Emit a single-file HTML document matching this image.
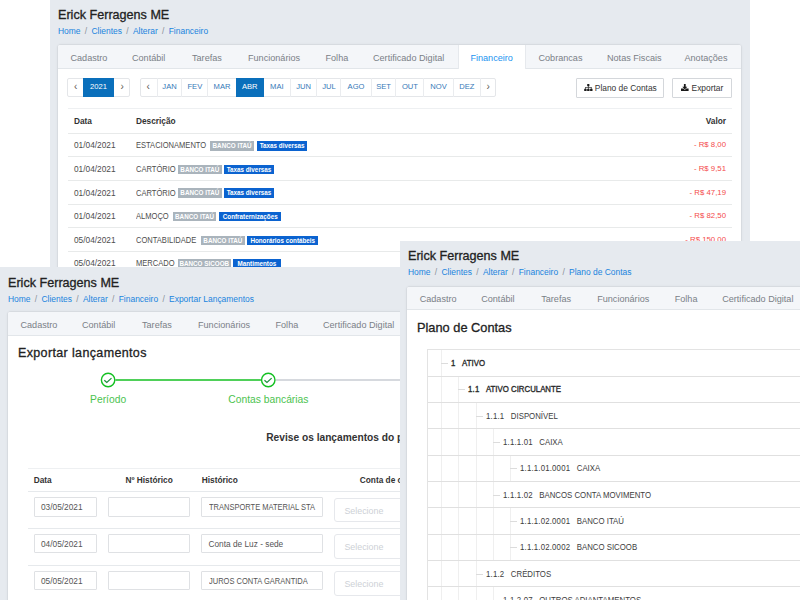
<!DOCTYPE html>
<html><head><meta charset="utf-8">
<style>
*{box-sizing:border-box;margin:0;padding:0}
html,body{width:800px;height:600px;overflow:hidden;background:#fff;font-family:"Liberation Sans",sans-serif;color:#444}
.scr{position:absolute;background:#e6eaef;overflow:hidden}
.ttl{position:absolute;left:8px;top:7px;font-size:12.6px;color:#222;white-space:nowrap;-webkit-text-stroke:0.3px #222}
.bc{position:absolute;left:8px;top:26px;font-size:8.45px;color:#1a84de;white-space:nowrap}
.bc i{font-style:normal;color:#8a9097;padding:0 4.3px}
.card{position:absolute;left:8px;top:45px;background:#fff;border-radius:2px;box-shadow:0 0 0 0.5px rgba(0,0,0,.05),0 0 3px rgba(0,0,0,.11)}
.tabs{position:absolute;left:0;top:0;right:0;height:23.5px;border-radius:2px 2px 0 0;background:#f4f6f9;border-bottom:1px solid #e2e6ea}
.tabs span{position:absolute;top:7.7px;font-size:9.1px;color:#7a8087;white-space:nowrap}
.tabs .act{background:#fff;color:#2193f0;top:0;height:23.5px;padding-top:7.7px;border-left:1px solid #e6e9ed;border-right:1px solid #e6e9ed}
.a{position:absolute;white-space:nowrap}
.grp{position:absolute;height:18.8px;border:1px solid #e4e6e9;border-radius:2px;background:#fff}
.grp b{position:absolute;top:-1px;height:18.8px;font-weight:normal;text-align:center;line-height:18.8px;font-size:7.6px;color:#3579b8}
.grp b.on{background:#0a6fbb;color:#fff}
.grp b.ch{color:#5f5955;font-size:10px;font-weight:normal}
.btn{position:absolute;height:19.5px;border:1px solid #d4d7db;border-radius:1px;background:#fff;font-size:8.4px;color:#333;line-height:17.5px;white-space:nowrap}
.tb{position:absolute;left:9.5px;width:664.5px;border-top:1px solid #eef0f2}
.tr{position:absolute;left:0;right:0;border-bottom:1px solid #e8eaea}
.tr span{position:absolute;white-space:nowrap;font-size:8.3px;color:#4d4d4d}
.th span{font-weight:bold;color:#333;font-size:8.3px}
.bd{position:absolute;font-style:normal;height:9.5px;line-height:9.7px;font-size:6.3px;font-weight:bold;color:#fff;text-align:center;white-space:nowrap;overflow:hidden}
.tr span.desc{font-size:8.3px;transform:scaleX(0.91);transform-origin:0 0}
.bg{background:#aab4bc}
.bb{background:#0b63d0}
.tr span.val{color:#f44b4b;right:6px;font-size:7.8px}
.h2{font-size:12.5px;letter-spacing:0.36px;color:#222;-webkit-text-stroke:0.3px #222}
.h3{font-size:12.8px;color:#222;-webkit-text-stroke:0.3px #222}
.stl{text-align:center;font-size:10.3px;color:#4cc34f}
.rev{font-size:10.2px;font-weight:bold;color:#333}
.th2 span{font-size:8.3px;font-weight:bold;color:#333}
.inp.u span{display:inline-block;font-size:8.3px;transform:scaleX(0.905);transform-origin:0 0}
.inp{position:absolute;top:4.8px;height:19.5px;border:1px solid #dfe1e4;border-radius:1px;font-size:8.3px;color:#555;padding-left:6.5px;line-height:19px;white-space:nowrap;overflow:hidden}
.sel{position:absolute;top:5.3px;height:24.5px;border:1px solid #e6e8ec;border-radius:3px;font-size:8.9px;color:#cdd1d6;padding-left:9px;line-height:24px;white-space:nowrap}
.trow{border-bottom:1.6px solid #e0e0e0}
.vl{position:absolute;top:0;bottom:0;width:1px;background:#efefef}
.hl{position:absolute;top:12.5px;width:7px;height:1px;background:#dcdcdc}
.tn{position:absolute;top:7.6px;font-size:8.6px;color:#3d3d3d;white-space:nowrap;transform:scaleX(0.91);transform-origin:0 0}
.tn em{font-style:normal;padding-left:7.2px}
.tn u{text-decoration:none;letter-spacing:0.2px}
.tn.b{color:#2a2a2a;-webkit-text-stroke:0.35px #2a2a2a}

</style></head><body>
<div class="scr" style="left:50px;top:0px;width:700px;height:600px">
  <div class="ttl" style="top:7.5px">Erick Ferragens ME</div>
  <div class="bc" style="top:26.0px">Home<i>/</i>Clientes<i>/</i>Alterar<i>/</i>Financeiro</div>
  <div class="card" style="left:8px;top:45px;width:683px;height:600px">
<div class="tabs"><span style="left:12.5px">Cadastro</span><span style="left:74px">Contábil</span><span style="left:134px">Tarefas</span><span style="left:190px">Funcionários</span><span style="left:267.5px">Folha</span><span style="left:315px">Certificado Digital</span><span class="act" style="left:399.7px;width:67.9px;text-align:center">Financeiro</span><span style="left:480.5px">Cobrancas</span><span style="left:549px">Notas Fiscais</span><span style="left:626.5px">Anotações</span></div>
<div class="grp" style="left:9.20px;top:33.2px;width:63.00px"><b class="ch" style="left:-1px;width:16.8px">‹</b><b class="on" style="left:14.8px;width:31px">2021</b><b class="ch" style="left:45.8px;width:16.2px">›</b></div>
<div class="grp" style="left:81.75px;top:33.2px;width:355.85px"><b class="ch" style="left:-1.00px;width:16.95px;">‹</b><b class="" style="left:15.95px;width:24.70px;border-left:1px solid #eaecef;">JAN</b><b class="" style="left:40.65px;width:25.85px;border-left:1px solid #eaecef;">FEV</b><b class="" style="left:66.50px;width:28.50px;border-left:1px solid #eaecef;">MAR</b><b class="on" style="left:95.00px;width:28.00px;">ABR</b><b class="" style="left:123.00px;width:26.25px;">MAI</b><b class="" style="left:149.25px;width:26.40px;border-left:1px solid #eaecef;">JUN</b><b class="" style="left:175.65px;width:24.00px;border-left:1px solid #eaecef;">JUL</b><b class="" style="left:199.65px;width:30.30px;border-left:1px solid #eaecef;">AGO</b><b class="" style="left:229.95px;width:24.70px;border-left:1px solid #eaecef;">SET</b><b class="" style="left:254.65px;width:28.00px;border-left:1px solid #eaecef;">OUT</b><b class="" style="left:282.65px;width:29.35px;border-left:1px solid #eaecef;">NOV</b><b class="" style="left:312.00px;width:27.00px;border-left:1px solid #eaecef;">DEZ</b><b class="ch" style="left:339.00px;width:15.85px;border-left:1px solid #eaecef;">›</b></div>
<div class="btn" style="left:517.50px;top:33px;width:88.50px"><svg width="9" height="8" viewBox="0 0 9 8" style="position:absolute;left:7.5px;top:5.2px"><rect x="3.2" y="0" width="2.2" height="2.2" rx="0.3" fill="#1a1a1a"/><rect x="4" y="2" width="0.7" height="1.4" fill="#333"/><rect x="1.1" y="3.3" width="6.6" height="0.7" fill="#333"/><rect x="1.1" y="3.3" width="0.7" height="1.6" fill="#333"/><rect x="6.9" y="3.3" width="0.7" height="1.6" fill="#333"/><rect x="4" y="3.3" width="0.7" height="1.6" fill="#333"/><rect x="0.2" y="4.7" width="2.4" height="2.4" rx="0.3" fill="#1a1a1a"/><rect x="3.15" y="4.7" width="2.4" height="2.4" rx="0.3" fill="#1a1a1a"/><rect x="6.1" y="4.7" width="2.4" height="2.4" rx="0.3" fill="#1a1a1a"/></svg><span class="a" style="left:18.3px;top:0.8px">Plano de Contas</span></div>
<div class="btn" style="left:614.00px;top:33px;width:60.00px"><svg width="8" height="8" viewBox="0 0 8 8" style="position:absolute;left:7.6px;top:4.6px"><rect x="2.9" y="0" width="1.8" height="3" fill="#1a1a1a"/><path d="M1.3 2.8h5L3.8 5.4z" fill="#1a1a1a"/><path d="M0 4.6h2.4L3.8 6 5.2 4.6H7.6V6.9H0z" fill="#1a1a1a"/></svg><span class="a" style="left:18.6px;top:0.8px">Exportar</span></div>
<div class="tb" style="top:63.00px;height:400px"><div class="tr th" style="top:0.00px;height:24.70px"><span style="left:6.5px;top:7.35px">Data</span><span style="left:68.5px;top:7.35px">Descrição</span><span style="right:6px;top:7.35px">Valor</span></div><div class="tr" style="top:24.70px;height:23.65px"><span style="left:6.5px;top:6.53px">01/04/2021</span><span class="desc" style="left:68.5px;top:6.53px">ESTACIONAMENTO</span><i class="bd bg" style="left:142.70px;width:43.80px;top:7.33px">BANCO ITAÚ</i><i class="bd bb" style="left:189.50px;width:50.20px;top:7.33px">Taxas diversas</i><span class="val" style="top:6.73px">- R$ 8,00</span></div><div class="tr" style="top:48.35px;height:23.65px"><span style="left:6.5px;top:6.53px">01/04/2021</span><span class="desc" style="left:68.5px;top:6.53px">CARTÓRIO</span><i class="bd bg" style="left:110.50px;width:43.80px;top:7.33px">BANCO ITAÚ</i><i class="bd bb" style="left:156.30px;width:50.40px;top:7.33px">Taxas diversas</i><span class="val" style="top:6.73px">- R$ 9,51</span></div><div class="tr" style="top:72.00px;height:23.65px"><span style="left:6.5px;top:6.53px">01/04/2021</span><span class="desc" style="left:68.5px;top:6.53px">CARTÓRIO</span><i class="bd bg" style="left:110.50px;width:43.80px;top:7.33px">BANCO ITAÚ</i><i class="bd bb" style="left:156.30px;width:50.40px;top:7.33px">Taxas diversas</i><span class="val" style="top:6.73px">- R$ 47,19</span></div><div class="tr" style="top:95.65px;height:23.65px"><span style="left:6.5px;top:6.53px">01/04/2021</span><span class="desc" style="left:68.5px;top:6.53px">ALMOÇO</span><i class="bd bg" style="left:105.20px;width:43.80px;top:7.33px">BANCO ITAÚ</i><i class="bd bb" style="left:151.75px;width:62.00px;top:7.33px">Confraternizações</i><span class="val" style="top:6.73px">- R$ 82,50</span></div><div class="tr" style="top:119.30px;height:23.65px"><span style="left:6.5px;top:6.52px">05/04/2021</span><span class="desc" style="left:68.5px;top:6.52px">CONTABILIDADE</span><i class="bd bg" style="left:133.50px;width:43.80px;top:7.32px">BANCO ITAÚ</i><i class="bd bb" style="left:179.75px;width:71.00px;top:7.32px">Honorários contábeis</i><span class="val" style="top:6.72px">- R$ 150,00</span></div><div class="tr" style="top:142.95px;height:23.65px"><span style="left:6.5px;top:6.53px">05/04/2021</span><span class="desc" style="left:68.5px;top:6.53px">MERCADO</span><i class="bd bg" style="left:110.50px;width:52.50px;top:7.33px">BANCO SICOOB</i><i class="bd bb" style="left:165.75px;width:47.25px;top:7.33px">Mantimentos</i><span class="val" style="top:6.73px">- R$ 32,00</span></div></div>
  </div>
</div>
<div class="scr" style="left:0px;top:267px;width:400px;height:333px">
  <div class="ttl" style="top:8.5px">Erick Ferragens ME</div>
  <div class="bc" style="top:26.5px">Home<i>/</i>Clientes<i>/</i>Alterar<i>/</i>Financeiro<i>/</i>Exportar Lançamentos</div>
  <div class="card" style="left:8px;top:45px;width:460px;height:400px">
<div class="tabs"><span style="left:12.5px">Cadastro</span><span style="left:74px">Contábil</span><span style="left:134px">Tarefas</span><span style="left:190px">Funcionários</span><span style="left:267.5px">Folha</span><span style="left:315px">Certificado Digital</span></div>
<div class="a h2" style="left:10px;top:34px">Exportar lançamentos</div>
<svg class="a" style="left:0;top:58.40px" width="420" height="20" viewBox="8 370.40 420 20"><line x1="115.40" y1="380.40" x2="260.95" y2="380.40" stroke="#14c022" stroke-width="1.4"/><line x1="275.55" y1="380.40" x2="430" y2="380.40" stroke="#c9ccd3" stroke-width="1.4"/><circle cx="108.10" cy="380.40" r="6.7" fill="#fff" stroke="#14c022" stroke-width="1.4"/><path d="M104.30 380.60 L106.80 382.80 L111.50 378.50" fill="none" stroke="#1d8f3c" stroke-width="1.25"/><circle cx="268.25" cy="380.40" r="6.7" fill="#fff" stroke="#14c022" stroke-width="1.4"/><path d="M264.45 380.60 L266.95 382.80 L271.65 378.50" fill="none" stroke="#1d8f3c" stroke-width="1.25"/></svg>
<div class="a stl" style="left:60.10px;width:80px;top:81.5px">Período</div>
<div class="a stl" style="left:210.40px;width:100px;top:81.5px">Contas bancárias</div>
<div class="a rev" style="left:258.25px;top:120px">Revise os lançamentos do período</div>
<div class="a" style="left:19.5px;top:155.5px;width:500px;height:200px;border-top:1px solid #eef0f2"><div class="a th2" style="left:0;top:0;width:500px;height:23.75px;border-bottom:1px solid #e6e9ec"><span class="a" style="left:6.25px;top:6px">Data</span><span class="a" style="left:98.00px;top:6px">Nº Histórico</span><span class="a" style="left:174.30px;top:6px">Histórico</span><span class="a" style="left:332.30px;top:6px">Conta de crédito</span></div><div class="a" style="left:0;top:23.75px;width:500px;height:37px;border-bottom:1px solid #e6e9ec"><div class="inp" style="left:6.00px;width:63px">03/05/2021</div><div class="inp" style="left:80.50px;width:81.5px"></div><div class="inp u" style="left:173.50px;width:121.5px"><span>TRANSPORTE MATERIAL STA</span></div><div class="sel" style="left:306.90px;width:150px">Selecione</div></div><div class="a" style="left:0;top:60.65px;width:500px;height:37px;border-bottom:1px solid #e6e9ec"><div class="inp" style="left:6.00px;width:63px">04/05/2021</div><div class="inp" style="left:80.50px;width:81.5px"></div><div class="inp" style="left:173.50px;width:121.5px"><span>Conta de Luz - sede</span></div><div class="sel" style="left:306.90px;width:150px">Selecione</div></div><div class="a" style="left:0;top:97.55px;width:500px;height:37px;border-bottom:1px solid #e6e9ec"><div class="inp" style="left:6.00px;width:63px">05/05/2021</div><div class="inp" style="left:80.50px;width:81.5px"></div><div class="inp u" style="left:173.50px;width:121.5px"><span>JUROS CONTA GARANTIDA</span></div><div class="sel" style="left:306.90px;width:150px">Selecione</div></div></div>
  </div>
</div>
<div class="scr" style="left:400px;top:241px;width:400px;height:359px">
  <div class="ttl" style="top:7.5px">Erick Ferragens ME</div>
  <div class="bc" style="top:25.7px">Home<i>/</i>Clientes<i>/</i>Alterar<i>/</i>Financeiro<i>/</i>Plano de Contas</div>
  <div class="card" style="left:7.2px;top:45.8px;width:460px;height:400px">
<div class="tabs"><span style="left:12.5px">Cadastro</span><span style="left:74px">Contábil</span><span style="left:134px">Tarefas</span><span style="left:190px">Funcionários</span><span style="left:267.5px">Folha</span><span style="left:315px">Certificado Digital</span></div>
<div class="a h3" style="left:9.80px;top:33.20px">Plano de Contas</div>
<div class="a" style="left:19.40px;top:62.60px;width:500px;height:300px;border-left:1px solid #e3e3e3;border-top:1px solid #e3e3e3"><div class="a trow" style="left:0;top:0.00px;width:500px;height:26.33px"><i class="vl" style="left:13.30px"></i><i class="hl" style="left:13.30px"></i><span class="tn b" style="left:23.30px"><u>1</u><em>ATIVO</em></span></div><div class="a trow" style="left:0;top:26.33px;width:500px;height:26.33px"><i class="vl" style="left:13.30px"></i><i class="vl" style="left:30.65px"></i><i class="hl" style="left:30.65px"></i><span class="tn b" style="left:40.65px"><u>1.1</u><em>ATIVO CIRCULANTE</em></span></div><div class="a trow" style="left:0;top:52.66px;width:500px;height:26.33px"><i class="vl" style="left:13.30px"></i><i class="vl" style="left:30.65px"></i><i class="vl" style="left:48.00px"></i><i class="hl" style="left:48.00px"></i><span class="tn" style="left:58.00px"><u>1.1.1</u><em>DISPONÍVEL</em></span></div><div class="a trow" style="left:0;top:78.99px;width:500px;height:26.33px"><i class="vl" style="left:13.30px"></i><i class="vl" style="left:30.65px"></i><i class="vl" style="left:48.00px"></i><i class="vl" style="left:65.35px"></i><i class="hl" style="left:65.35px"></i><span class="tn" style="left:75.35px"><u>1.1.1.01</u><em>CAIXA</em></span></div><div class="a trow" style="left:0;top:105.32px;width:500px;height:26.33px"><i class="vl" style="left:13.30px"></i><i class="vl" style="left:30.65px"></i><i class="vl" style="left:48.00px"></i><i class="vl" style="left:65.35px"></i><i class="vl" style="left:82.70px"></i><i class="hl" style="left:82.70px"></i><span class="tn" style="left:92.70px"><u>1.1.1.01.0001</u><em>CAIXA</em></span></div><div class="a trow" style="left:0;top:131.65px;width:500px;height:26.33px"><i class="vl" style="left:13.30px"></i><i class="vl" style="left:30.65px"></i><i class="vl" style="left:48.00px"></i><i class="vl" style="left:65.35px"></i><i class="hl" style="left:65.35px"></i><span class="tn" style="left:75.35px"><u>1.1.1.02</u><em>BANCOS CONTA MOVIMENTO</em></span></div><div class="a trow" style="left:0;top:157.98px;width:500px;height:26.33px"><i class="vl" style="left:13.30px"></i><i class="vl" style="left:30.65px"></i><i class="vl" style="left:48.00px"></i><i class="vl" style="left:65.35px"></i><i class="vl" style="left:82.70px"></i><i class="hl" style="left:82.70px"></i><span class="tn" style="left:92.70px"><u>1.1.1.02.0001</u><em>BANCO ITAÚ</em></span></div><div class="a trow" style="left:0;top:184.31px;width:500px;height:26.33px"><i class="vl" style="left:13.30px"></i><i class="vl" style="left:30.65px"></i><i class="vl" style="left:48.00px"></i><i class="vl" style="left:65.35px"></i><i class="vl" style="left:82.70px"></i><i class="hl" style="left:82.70px"></i><span class="tn" style="left:92.70px"><u>1.1.1.02.0002</u><em>BANCO SICOOB</em></span></div><div class="a trow" style="left:0;top:210.64px;width:500px;height:26.33px"><i class="vl" style="left:13.30px"></i><i class="vl" style="left:30.65px"></i><i class="vl" style="left:48.00px"></i><i class="hl" style="left:48.00px"></i><span class="tn" style="left:58.00px"><u>1.1.2</u><em>CRÉDITOS</em></span></div><div class="a trow" style="left:0;top:236.97px;width:500px;height:26.33px"><i class="vl" style="left:13.30px"></i><i class="vl" style="left:30.65px"></i><i class="vl" style="left:48.00px"></i><i class="vl" style="left:65.35px"></i><i class="hl" style="left:65.35px"></i><span class="tn" style="left:75.35px"><u>1.1.2.07</u><em>OUTROS ADIANTAMENTOS</em></span></div></div>
  </div>
</div>
</body></html>
